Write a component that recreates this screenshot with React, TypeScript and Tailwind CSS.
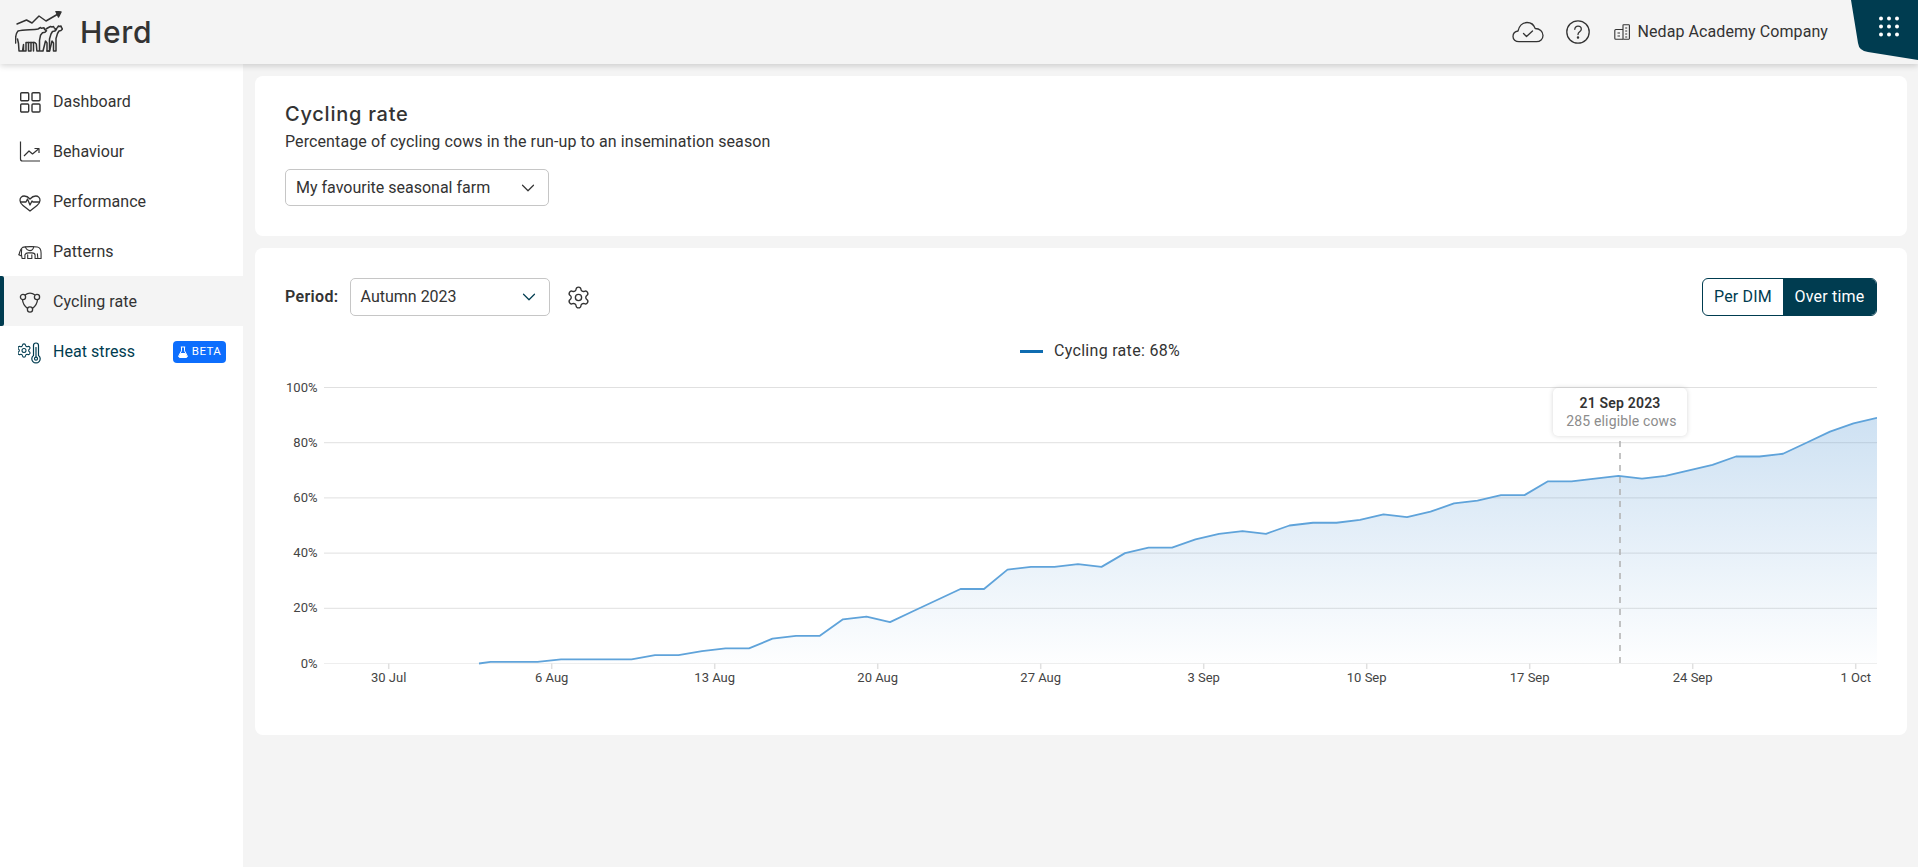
import React from 'react';
import { ChevronDown, Settings } from 'lucide-react';

const values = [0, 0.6, 0.6, 0.6, 1.5, 1.5, 1.5, 1.5, 3, 3, 4.5, 5.5, 5.5, 9, 10, 10, 16, 17, 15, 19, 23, 27, 27, 34, 35, 35, 36, 35, 40, 42, 42, 45, 47, 48, 47, 50, 51, 51, 52, 54, 53, 55, 58, 59, 61, 61, 66, 66, 67, 68, 67, 68, 70, 72, 75, 75, 76, 80, 84, 87, 89];
const xTicks = ['30 Jul', '6 Aug', '13 Aug', '20 Aug', '27 Aug', '3 Sep', '10 Sep', '17 Sep', '24 Sep', '1 Oct'];
const yTicks = [100, 80, 60, 40, 20, 0];

// first point only marks where the line lifts off the baseline
const toX = (i: number) => (i === 0 ? 194 : 1592 - (values.length - 1 - i) * 23.5);
const toY = (p: number) => 288.5 - p * 2.76;
const linePoints = values.map((v, i) => `${toX(i)},${toY(v)}`).join(' ');
const areaPoints = `${toX(0)},288.5 ${linePoints} 1592,288.5`;

const DashboardIcon = () => (
  <svg width="24" height="24" viewBox="0 0 24 24" fill="none" stroke="currentColor" strokeWidth="1.4">
    <rect x="2.7" y="2.7" width="8" height="8" rx="1" />
    <rect x="14" y="2.7" width="8" height="8" rx="1" />
    <rect x="2.7" y="14" width="8" height="8" rx="1" />
    <rect x="14" y="14" width="8" height="8" rx="1" />
  </svg>
);

const BehaviourIcon = () => (
  <svg width="24" height="24" viewBox="0 0 24 24" fill="none" stroke="currentColor" strokeWidth="1.2" strokeLinejoin="round">
    <path d="M2.5 1.5V19a2 2 0 0 0 2 2H22" />
    <path d="M6 16l5-5 3.5 3L20.5 9" />
    <path d="M16.5 8.5h4.5V13" />
  </svg>
);

const PerformanceIcon = () => (
  <svg width="24" height="24" viewBox="0 0 24 24" fill="none" stroke="currentColor" strokeWidth="1.3" strokeLinejoin="round" strokeLinecap="round">
    <path d="M5 15.5C3 14 2 12.3 2 10.2 2 7.6 4 6 6.2 6c2.4 0 4.4 1.4 5.8 3 1.4-1.6 3.4-3 5.8-3C20 6 22 7.6 22 10.2c0 2.1-1 3.8-3 5.3L12 21z" />
    <path d="M3 12h5l1.5-3 2.5 6 2-4 1 1h6" />
  </svg>
);

const PatternsIcon = () => (
  <svg width="26" height="24" viewBox="0 0 26 24" fill="none" stroke="currentColor" strokeWidth="1.2" strokeLinejoin="round" strokeLinecap="round">
    <path d="M1 15c1-4 2-7 4-8 3-1 13-1 16-.5 2.5.5 4 3 4 6.5v6h-3.500l-.5-5" />
    <path d="M4 9c-.5 4-.5 7 .5 10h3L7.5 15c1-2 2.500-2 3.500-2h4c2 0 3.500 1 3.500 2.500V19h3" />
    <path d="M8 6.500c1 3 3 4 5 4 2.500 0 3.500-1.500 4-4" />
    <path d="M10.500 19v-4M15 19v-4M10.500 19h4.500" />
    <path d="M1 15l2 1" />
  </svg>
);

const CyclingIcon = () => (
  <svg width="24" height="24" viewBox="0 0 24 24" fill="none" stroke="currentColor" strokeWidth="1.3">
    <circle cx="5" cy="7" r="2.600" />
    <circle cx="19" cy="7" r="2.600" />
    <circle cx="12" cy="19.500" r="2.600" />
    <path d="M7 5C10 2.800 14 2.800 17 5" />
    <path d="M4.500 9.700C4.800 13.300 6.500 16.200 9.600 18.400" />
    <path d="M19.500 9.700C19.200 13.300 17.500 16.200 14.400 18.400" />
  </svg>
);

const HeatStressIcon = () => (
  <svg width="24" height="24" viewBox="0 0 24 24" fill="none" stroke="currentColor" strokeWidth="1.2" strokeLinejoin="round" strokeLinecap="round">
    <Settings x="-2" y="2.500" width="16" height="16" strokeWidth={1.6} />
    <path d="M15.500 15.400V5.500a2.500 2.500 0 0 1 5 0v9.900a4.200 4.200 0 1 1-5 0z" />
    <circle cx="18" cy="18.700" r="1.500" />
    <path d="M18 17V7.500" />
  </svg>
);

const CloudCheckIcon = () => (
  <svg width="32" height="22" viewBox="0 0 32 22" fill="none" stroke="currentColor" strokeWidth="1.3" strokeLinejoin="round" strokeLinecap="round" className="text-[#333]">
    <path d="M7 20.700C3.400 20.700 1 18.400 1 15.400c0-2.800 2-5 5-5.400C7 5.500 10.300 1.500 15 1.500c4 0 7 2.500 8.200 6 4.500 0 7.800 3.200 7.800 7 0 3.600-2.800 6.200-6.500 6.200z" />
    <path d="M11.500 12.500l3 3 6-5.500" />
  </svg>
);

const HelpIcon = () => (
  <svg width="24" height="24" viewBox="0 0 24 24" fill="none" stroke="currentColor" strokeWidth="1.3" strokeLinecap="round" className="text-[#333]">
    <circle cx="12" cy="12" r="11.200" />
    <path d="M8.800 9.300C8.800 7.400 10.300 6.200 12 6.200c1.900 0 3.300 1.200 3.300 3 0 2.600-3.300 2.700-3.300 5.300" />
    <circle cx="12" cy="17.600" r=".6" fill="currentColor" />
  </svg>
);

const BuildingIcon = () => (
  <svg width="16" height="16" viewBox="0 0 16 16" fill="none" stroke="currentColor" strokeWidth="1.1" className="text-[#333]">
    <rect x="9" y=".8" width="6.400" height="14.400" rx=".6" />
    <path d="M9 5.500H1.800a1 1 0 0 0-1 1v7.700a1 1 0 0 0 1 1H9" />
    <path d="M11.200 4h2M11.200 7h2M11.200 10h2M11.200 13h2M3.500 9h2.500M3.500 12h2.500" />
  </svg>
);

const FlaskIcon = () => (
  <svg width="10" height="12" viewBox="0 0 10 12">
    <path d="M3.500 1v3.800L.8 9.700c-.5 1 .1 1.800 1 1.800h6.400c.9 0 1.500-.8 1-1.800L6.500 4.800V1M2.800 1h4.400" fill="none" stroke="white" strokeWidth="1" />
    <path d="M2.500 7h5l1.500 3c.3.800-.1 1.500-.8 1.500H1.800C1.100 11.500.7 10.800 1 10z" fill="white" />
  </svg>
);

const Logo = () => (
  <svg width="48" height="42" viewBox="0 0 48 42" fill="none" stroke="#333" strokeWidth="1.500" strokeLinejoin="round" strokeLinecap="round">
    <path d="M2 13l9.500-4 5.500 3 7-7 7 5 12-7" />
    <path d="M41 .5l5 .5-2.500 5z" fill="#333" />
    <path d="M.6 32c-.3-5 .4-10 2.400-12 5-1.500 15-1 20-2l2.500-1.500 1 .8 2.500-.5.5 1.500 2 1.500-1.500 1.500-2.500.5-2 2.500-1 5V40h-2.600l-.6-7-1.500-1.500H11V40H8.500v-6.500L7.500 40H4l-.5-7.500L2.500 28" />
    <path d="M13.500 31.500V40H16v-8.500M18.500 31.500V40" />
    <path d="M31 18l2.500-1.500 2-1 1.500.5 1.500-.5.8 1.500 2.200 1.500-1.500 1.500-2.500.5-1.500 2.500-1.500 5V40h-2.500v-8l-1.500-2-2.500 10h-2.500" />
    <path d="M40 19l2.500-2.500 1-1.500 1.200.5 1.300-.5.500 1.500 1 1.500-1.500 1.500-2 .5-1.500 2.500-1.500 5V40h-2.500v-8l-1.500-2-2.500 10h-2.500" />
  </svg>
);

const Corner = () => (
  <svg width="67" height="60" viewBox="0 0 67 60" className="shrink-0 self-start">
    <path d="M0 0H67V60L17 52Q8 51 7 43Z" fill="#003c50" />
    <g fill="white">
      <circle cx="30" cy="18.500" r="2" />
      <circle cx="38" cy="18.500" r="2" />
      <circle cx="46" cy="18.500" r="2" />
      <circle cx="30" cy="26.500" r="2" />
      <circle cx="38" cy="26.500" r="2" />
      <circle cx="46" cy="26.500" r="2" />
      <circle cx="30" cy="34.500" r="2" />
      <circle cx="38" cy="34.500" r="2" />
      <circle cx="46" cy="34.500" r="2" />
    </g>
  </svg>
);

const navItems = [
  { label: 'Dashboard', icon: <DashboardIcon /> },
  { label: 'Behaviour', icon: <BehaviourIcon /> },
  { label: 'Performance', icon: <PerformanceIcon /> },
  { label: 'Patterns', icon: <PatternsIcon /> },
  { label: 'Cycling rate', icon: <CyclingIcon />, active: true },
];

const Select = ({ label, className, chevron }: { label: string; className: string; chevron: string }) => (
  <div className={`flex items-center justify-between pl-[10px] pr-[9px] border border-[#c6c6c6] rounded-[5px] bg-white ${className}`}>
    <span>{label}</span>
    <ChevronDown size={22} strokeWidth={1.3} className={chevron} />
  </div>
);

const Chart = () => (
  <div className="relative mt-[12px]">
    <svg width="1592" height="330" viewBox="0 0 1592 330" className="block">
      <defs>
        <linearGradient id="area" x1="0" y1="0" x2="0" y2="1">
          <stop offset="0" stopColor="#5b9bd5" stopOpacity="0.3" />
          <stop offset="1" stopColor="#5b9bd5" stopOpacity="0.01" />
        </linearGradient>
      </defs>
      {yTicks.map((p) => (
        <g key={p}>
          <line x1="39" x2="1592" y1={toY(p)} y2={toY(p)} stroke={p === 0 ? '#eeeeee' : '#e0e0e0'} strokeWidth="1" />
          <text x="32.500" y={toY(p) + 4} textAnchor="end" fontSize="13" fill="#444">{p}%</text>
        </g>
      ))}
      {xTicks.map((t, i) => (
        <g key={t}>
          <line x1={103.7 + i * 163} x2={103.7 + i * 163} y1="288.500" y2="294" stroke="#e0e0e0" strokeWidth="1.500" />
          <text x={103.7 + i * 163} y="306.500" textAnchor="middle" fontSize="13" fill="#444">{t}</text>
        </g>
      ))}
      <polygon points={areaPoints} fill="url(#area)" />
      <polyline points={linePoints} fill="none" stroke="#5fa3da" strokeWidth="1.800" strokeLinejoin="round" />
      <line x1="1335" x2="1335" y1="66" y2="288" stroke="#b0b0b0" strokeWidth="1.500" strokeDasharray="6 6" />
    </svg>
    <div className="absolute left-[1268px] top-[13px] w-[134px] h-[48px] flex flex-col items-center justify-center rounded-[5px] bg-white shadow-[0_0_5px_rgba(0,0,0,0.16)] text-[14px] leading-[18px]">
      <span className="font-semibold text-[#333] tracking-[0.2px]">21 Sep 2023</span>
      <span className="pl-[3px] text-[#8c8c8c] tracking-[0.15px]">285 eligible cows</span>
    </div>
  </div>
);

export default function App() {
  return (
    <div className="h-screen flex flex-col bg-[#f4f4f4] text-[#333] text-[16px] font-['Roboto',sans-serif] overflow-hidden">
      <header className="relative z-10 h-[64px] shrink-0 flex items-center bg-[#f4f4f4] shadow-[0_2px_6px_rgba(0,0,0,0.16)]">
        <div className="ml-[15px]"><Logo /></div>
        <span className="ml-[17px] text-[30px] leading-none font-medium font-['Inter',sans-serif] tracking-[0.7px] text-[#333]">Herd</span>
        <div className="ml-auto flex items-center">
          <CloudCheckIcon />
          <div className="ml-[22px]"><HelpIcon /></div>
          <div className="ml-[24px]"><BuildingIcon /></div>
          <span className="ml-[7px] tracking-[0.08px]">Nedap Academy Company</span>
        </div>
        <div className="ml-[23px] self-stretch flex"><Corner /></div>
      </header>

      <div className="flex-1 flex min-h-0">
        <nav className="w-[243px] shrink-0 bg-white pt-[12px]">
          {navItems.map((item) => (
            <div key={item.label} className={`relative h-[50px] flex items-center pt-[2px] pl-[18px] ${item.active ? 'bg-[#f4f4f4]' : ''}`}>
              {item.active && <div className="absolute left-0 top-0 bottom-0 w-[4px] rounded-r-[2px] bg-[#003c50]" />}
              <div className="w-[24px] flex justify-center">{item.icon}</div>
              <span className="ml-[11px] tracking-[0.05px]">{item.label}</span>
            </div>
          ))}
          <div className="h-[50px] flex items-center pt-[2px] pl-[18px] text-[#003c50]">
            <div className="w-[24px] flex justify-center"><HeatStressIcon /></div>
            <span className="ml-[11px] tracking-[0.05px]">Heat stress</span>
            <div className="ml-auto mr-[17px] w-[53px] h-[22px] flex items-center justify-center gap-[4px] rounded-[4px] bg-[#0d6efd] text-white text-[11.500px] tracking-[0.4px]">
              <FlaskIcon />
              BETA
            </div>
          </div>
        </nav>

        <main className="flex-1 flex flex-col gap-[12px] pt-[12px] pl-[12px] pr-[11px] min-w-0">
          <section className="h-[160px] rounded-lg bg-white px-[30px] pt-[24px]">
            <h1 className="text-[20px] leading-[28px] font-medium font-['Inter',sans-serif] tracking-[0.75px]">Cycling rate</h1>
            <p className="leading-[24px] mt-[2px] tracking-[0.1px]">Percentage of cycling cows in the run-up to an insemination season</p>
            <Select label="My favourite seasonal farm" className="mt-[15px] w-[264px] h-[37px]" chevron="text-[#333]" />
          </section>

          <section className="h-[487px] rounded-lg bg-white px-[30px] pt-[30px]">
            <div className="flex items-center">
              <span className="font-semibold mr-[11px] tracking-[0.35px]">Period:</span>
              <Select label="Autumn 2023" className="w-[200px] h-[38px]" chevron="text-[#003c50]" />
              <Settings size={25} strokeWidth={1.3} className="ml-[16px]" />
              <div className="ml-auto flex h-[38px] w-[175px] rounded-[6px] border border-[#003c50] overflow-hidden text-[#003c50]">
                <div className="w-[80px] flex items-center justify-center tracking-[0.2px]">Per DIM</div>
                <div className="flex-1 flex items-center justify-center bg-[#003c50] text-white tracking-[0.2px]">Over time</div>
              </div>
            </div>
            <div className="mt-[23px] h-[24px] pl-[38px] flex items-center justify-center">
              <div className="w-[23px] h-[3px] bg-[#0f6cb0]" />
              <span className="ml-[11px] tracking-[0.3px]">Cycling rate: 68%</span>
            </div>
            <Chart />
          </section>
        </main>
      </div>
    </div>
  );
}
